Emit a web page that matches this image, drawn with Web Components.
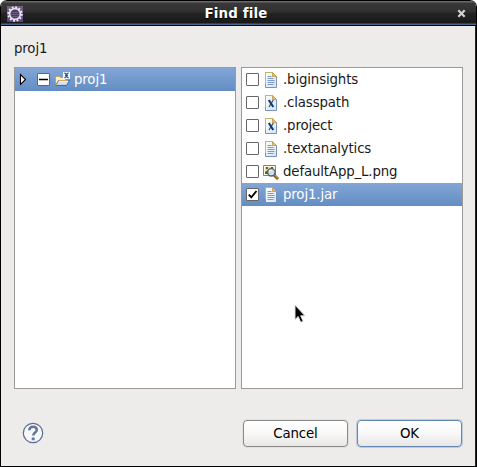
<!DOCTYPE html>
<html lang="en">
<head>
<meta charset="utf-8">
<title>Find file</title>
<style>
html,body{margin:0;width:477px;height:467px;overflow:hidden;background:#fff}
body{font:13.33px/23px "DejaVu Sans",sans-serif;letter-spacing:-.14px;color:#1a1a1a}
</style>
</head>
<body>
<find-dialog></find-dialog>
<script>
const define = (name, html) => customElements.define(name, class extends HTMLElement {
  constructor() {
    super();
    const t = document.createElement('template');
    t.innerHTML = html;
    this.attachShadow({mode: 'open'}).append(t.content.cloneNode(true));
  }
});

const page = `
  <path d="M1.5 .5h7l4 4v11h-11z" fill="url(#p)" stroke="#7991bd"/>
  <path d="M1.5 12V.5h7" fill="none" stroke="#c6b36c"/>
  <path d="M8.5 .5l4 4h-4z" fill="#e3c078" stroke="#c9a454"/>`;
const grad = `<defs><linearGradient id="p" x2="1" y2="1"><stop stop-color="#fffef4"/><stop offset="1" stop-color="#d3e3f8"/></linearGradient></defs>`;
const glyphs = {
  text: grad + page + `<path d="M3.5 4.5h4M3.5 6.5h6M3.5 8.5h7M3.5 10.5h7M3.5 12.5h6" stroke="#7c9bcd" fill="none"/>`,
  xml: grad + page + `<path d="M9.300 5L5 12" stroke="#2f5684" stroke-width="1.300" fill="none"/><path d="M4.800 5l4.500 7" stroke="#153a6b" stroke-width="2.100"/>`,
  image: `<path d="M.5 1.5h12v10h-12z" fill="#fffbe0" stroke="#97834a"/>
    <path d="M2 3h9v7H2z" fill="#f2dc77"/><path d="M2 8l3-2 2 2v2H2zM3 3h2v2H3zM8 3h2v2H8z" fill="#3f6550"/>
    <path d="M11 11l4 4" stroke="#8b5a20" stroke-width="3"/><path d="M11.500 10.800l3.500 3.500" stroke="#e5aa50" stroke-width="1"/>
    <circle cx="8.300" cy="8.300" r="3.700" fill="#cfdfea" fill-opacity=".9" stroke="#566273" stroke-width="1.300"/><path d="M6.500 8a2 2 0 0 1 2-1.600" stroke="#fff" fill="none"/>`,
  folder: `<path d="M1.500 13.500V5.500l1-1h3l1 1h5v2" fill="#fff1bf" stroke="#cf9d43"/>
    <path d="M1.500 13.500l3-5h11l-3 5z" fill="#b9d7f7" stroke="#3f6dac"/>
    <path d="M5 9.500h9M4 11h9" stroke="#e6f2fd"/><path d="M2 13.500l3-5h9" fill="none" stroke="#dca849"/>
    <path d="M9 0h7v7H9z" fill="#f5faff"/><path d="M10.500 .800l2 1.700 2-1.700M10.500 6l2-1.700 2 1.700M11 3.400h3" fill="none" stroke="#315c91" stroke-width="1.200"/>`
};

customElements.define('file-icon', class extends HTMLElement {
  connectedCallback() {
    this.attachShadow({mode: 'open'}).innerHTML = `<style>:host{display:block;width:16px;height:16px;flex:none}svg{display:block}</style>
      <svg width="16" height="16" viewBox="0 0 16 16">${glyphs[this.getAttribute('kind')]}</svg>`;
  }
});

define('check-box', `<style>
  :host{display:block;flex:none;box-sizing:border-box;width:13px;height:13px;border:1px solid #666;border-radius:1px;background:#fff}
  svg{display:none;width:11px;height:11px}
  :host([state=checked]) .c,:host([state=mixed]) .m{display:block}
  </style><svg class="c" viewBox="0 0 11 11"><path d="M1.800 5.600l2.500 2.700L9.500 2" fill="none" stroke="#000" stroke-width="1.900"/></svg>
  <svg class="m" viewBox="0 0 11 11"><path d="M1 5.500h9" stroke="#000"  stroke-width="1.400"/></svg>`);

define('list-row', `<style>
  :host{display:flex;height:23px;align-items:center}
  :host([selected]){background:linear-gradient(#83a6d6,#638dc3);color:#fff}
  ::slotted(check-box){margin-left:4px}
  ::slotted(file-icon){margin:0 3px 0 5px}
  ::slotted(file-icon[kind=folder]){margin:0 4px 0 4px}
  ::slotted(file-icon[kind=image]){margin:0 4px 0 4px}
  </style><slot></slot>`);

define('tree-arrow', `<style>:host{display:block;width:14px;height:14px;margin:0 0 0 4px;flex:none}svg{display:block}</style>
  <svg width="14" height="14" viewBox="0 0 14 14"><path d="M1.500 1.500v10l5-5z" fill="#fff" stroke="#000" stroke-width="1.100"/></svg>`);

define('list-pane', `<style>:host{display:block;flex:none;box-sizing:border-box;width:222px;height:322px;border:1px solid #9c9a97;background:#fff}</style><slot></slot>`);

define('push-button', `<style>
  :host{display:flex;box-sizing:border-box;width:105px;height:27px;align-items:center;justify-content:center;border:1px solid #8b8987;border-radius:4px;background:linear-gradient(#fff,#f8f8f8 50%,#e8e7e5);box-shadow:0 0 0 1px #e2e1df;color:#000}
  :host([primary]){border-color:#6488b6;box-shadow:0 0 0 1px #bccbdd}
  </style><slot></slot>`);

define('help-button', `<style>:host{display:block;width:22px;height:22px;margin-top:-2px}svg{display:block}</style>
  <svg width="22" height="22" viewBox="0 0 22 22"><circle cx="11" cy="11" r="9.700" fill="#f6f7f9" stroke="#586d91" stroke-width="1.200"/>
  <path d="M7.300 8.300c.2-4.700 7.800-4.500 7.500-.3-.2 2.500-3.500 2.700-3.500 5.500" fill="none" stroke="#63779b" stroke-width="2.600"/><path d="M9.700 15.500h3v2.700h-3z" fill="#63779b"/></svg>`);

define('title-bar', `<style>
  :host{display:grid;grid-template-columns:21px 1fr 26px;align-items:center;box-sizing:border-box;height:26px;border-top:1px solid #000;border-bottom:1px solid #000;background:linear-gradient(#6b6868 0 1px,#393939 2px,#303030 11px,#242424 12px,#191919 22px,#49688e 23px,#49688e);color:#fff;font-weight:bold;letter-spacing:.2px;text-align:center;border-radius:6px 6px 0 0}
  .t{text-shadow:0 1px 1px #000}
  svg{display:block}.e{margin:1px 0 0 6px}.x{margin:2px 0 0 7px}
  </style>
  <svg class="e" width="16" height="16" viewBox="0 0 16 16"><defs><linearGradient id="g" x2="0" y2="1"><stop stop-color="#746080"/><stop offset="1" stop-color="#5c3f86"/></linearGradient></defs><path d="M0 0h16v16H0z" fill="url(#g)"/>
  <circle cx="8" cy="8" r="6.800" fill="none" stroke="#eee" stroke-width="1.800" stroke-dasharray="1.900 1.660"/><circle cx="8" cy="8" r="5.400" fill="#493d61" stroke="#e5e1e8" stroke-width="1.700"/><path d="M4.500 6.500h7M4 8.500h8M4.500 10.500h7" stroke="#6b5e85"/></svg>
  <span class="t"><slot></slot></span>
  <svg class="x" width="10" height="10" viewBox="0 0 10 10"><path d="M1.300 1.300l6.400 6.400m0-6.400l-6.400 6.400" stroke="#d2d2d2" stroke-width="2.200"/></svg>`);

define('mouse-pointer', `<style>:host{position:absolute;left:293px;top:304px}svg{display:block}</style>
  <svg width="13" height="20" viewBox="0 0 13 20"><path d="M1 1v14.500l3.200-3 2.500 5.800 2.500-1-2.500-5.500H11z" fill="#000" stroke="#ddd" stroke-width="1"/></svg>`);

define('find-dialog', `<style>
  :host{display:flex;flex-direction:column;box-sizing:border-box;position:relative;width:477px;height:467px;background:#edecea;border:solid #000;border-width:0 1px 1px;border-radius:7px 7px 0 0;overflow:hidden}
  main{flex:1;display:flex;flex-direction:column;padding:0 12px 0 13px;border-right:1px solid #262626}
  .label{padding:11px 0 7px;height:23px}
  .panes{display:flex;gap:5px}
  footer{display:flex;align-items:center;padding:31px 1px 0 8px}
  push-button{margin-left:9px}push-button:first-of-type{margin-left:auto}
  </style>
  <title-bar>Find file</title-bar>
  <main>
    <div class="label">proj1</div>
    <div class="panes">
      <list-pane><list-row selected><tree-arrow></tree-arrow><check-box state="mixed"></check-box><file-icon kind="folder"></file-icon><span>proj1</span></list-row></list-pane>
      <list-pane>
        <list-row><check-box></check-box><file-icon kind="text"></file-icon><span>.biginsights</span></list-row>
        <list-row><check-box></check-box><file-icon kind="xml"></file-icon><span>.classpath</span></list-row>
        <list-row><check-box></check-box><file-icon kind="xml"></file-icon><span>.project</span></list-row>
        <list-row><check-box></check-box><file-icon kind="text"></file-icon><span>.textanalytics</span></list-row>
        <list-row><check-box></check-box><file-icon kind="image"></file-icon><span>defaultApp_L.png</span></list-row>
        <list-row selected><check-box state="checked"></check-box><file-icon kind="text"></file-icon><span>proj1.jar</span></list-row>
      </list-pane>
    </div>
    <footer><help-button></help-button><push-button>Cancel</push-button><push-button primary>OK</push-button></footer>
  </main>
  <mouse-pointer></mouse-pointer>`);
</script>
</body>
</html>
